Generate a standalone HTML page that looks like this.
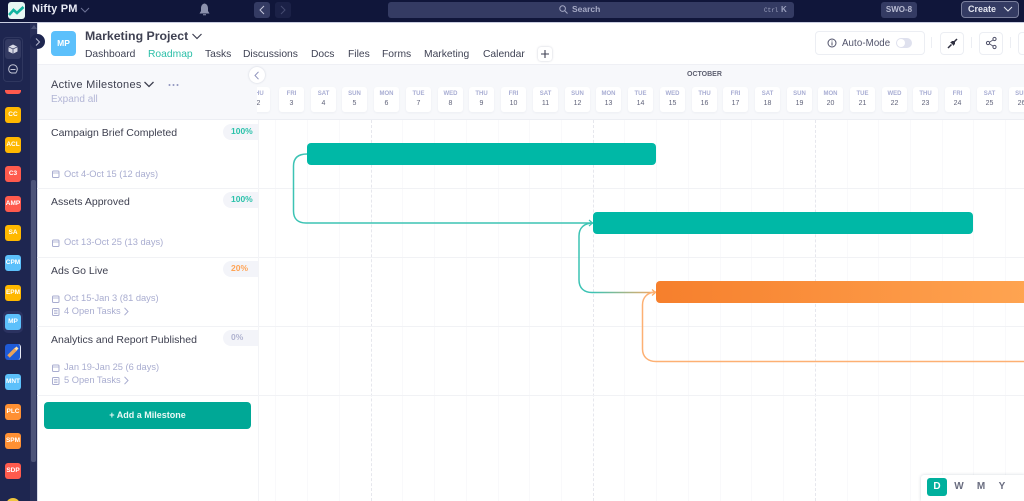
<!DOCTYPE html>
<html><head><meta charset="utf-8"><style>
*{box-sizing:border-box}
html,body{margin:0;padding:0;width:1024px;height:501px;overflow:hidden;background:#fff;font-family:"Liberation Sans",sans-serif}
#root{left:0;top:0;width:1024px;height:501px;overflow:hidden;background:#fff}
div,span{position:absolute;white-space:nowrap}
svg{position:absolute;overflow:visible}
.ic{left:5px;width:16px;height:16px;border-radius:3px;color:#fff;font-size:6.5px;font-weight:700;text-align:center;line-height:16px}
.y{background:#ffb800}.r{background:#ff5a4d}.b{background:#5cc0fb}.o{background:#ff9033}
.tab{top:48px;font-size:10.3px;color:#3f4254;line-height:13px}
.d{top:87px;width:25px;height:25px;background:#fff;border-radius:3px;box-shadow:0 1px 2px rgba(40,50,90,.05);text-align:center;font-weight:700}
.d i{position:absolute;left:0;right:0;top:4px;font-style:normal;font-size:6px;line-height:7px;color:#a8add3}
.d b{position:absolute;left:0;right:0;top:13px;font-size:7px;line-height:8px;color:#60637a;font-weight:400}
.t{left:51px;font-size:10.5px;color:#3e4050;line-height:13px}
.s{left:64px;font-size:9.3px;color:#a9add0;line-height:11px}
.p{left:223px;width:35px;height:16px;border-radius:8px 0 0 8px;background:#f3f4f9;font-size:8.5px;font-weight:700;line-height:14px;padding-left:8px}
.hl{left:37px;width:987px;height:1px;background:#f1f2f5}
.vl{top:120px;width:1px;height:381px;background:#f9f9fb}
.bar{height:22px;border-radius:4px;background:#00b8a6}
.btn{top:32px;width:24px;height:23px;border:1px solid #eceef3;border-radius:4px;background:#fff}
</style></head><body><div id="root">

<!-- top bar -->
<div style="left:0;top:0;width:1024px;height:23px;background:#10163a;border-bottom:1px solid #c9cde0"></div>
<div style="left:8px;top:2px;width:17px;height:17px;border-radius:3px;background:#e8f7f3"></div>
<svg style="left:8px;top:2px" width="17" height="17" viewBox="0 0 17 17"><path d="M1 13 L5.500 8 L9 11 L15.500 5" fill="none" stroke="#12b5a0" stroke-width="2.600"/></svg>
<div style="left:32px;top:2px;font-size:11px;font-weight:700;color:#e8eaf5;line-height:14px;letter-spacing:.2px">Nifty PM</div>
<svg style="left:80px;top:6px" width="10" height="8" viewBox="0 0 10 8"><path d="M1 2 L5 6 L9 2" fill="none" stroke="#6d7396" stroke-width="1"/></svg>
<svg style="left:199px;top:3px" width="11" height="13" viewBox="0 0 11 13"><path d="M5.500 0.500 C3 1 2 3 2 5.500 L2 8 L0.500 10.500 L10.500 10.500 L9 8 L9 5.500 C9 3 8 1 5.500 0.500 Z M4 11.300 h3 v1 h-3 Z" fill="#8c91ad"/></svg>
<div style="left:254px;top:2px;width:16px;height:16px;border-radius:3px;background:#343b63"></div>
<svg style="left:258px;top:5px" width="8" height="10" viewBox="0 0 8 10"><path d="M6 1 L2 5 L6 9" fill="none" stroke="#c6c9dc" stroke-width="1"/></svg>
<div style="left:275px;top:2px;width:16px;height:16px;border-radius:3px;background:#1b2147"></div>
<svg style="left:279px;top:5px" width="8" height="10" viewBox="0 0 8 10"><path d="M2 1 L6 5 L2 9" fill="none" stroke="#454b70" stroke-width="1"/></svg>
<div style="left:388px;top:2px;width:406px;height:16px;border-radius:3px;background:#343b63"></div>
<svg style="left:559px;top:5px" width="9" height="9" viewBox="0 0 9 9"><circle cx="3.600" cy="3.600" r="2.800" fill="none" stroke="#a5a9c4" stroke-width="1"/><path d="M5.800 5.800 L8.500 8.500" stroke="#a5a9c4" stroke-width="1"/></svg>
<div style="left:572px;top:3px;font-size:8.500px;font-weight:700;color:#a5a9c4;line-height:13px">Search</div>
<div style="left:764px;top:6px;font-family:'Liberation Mono',monospace;font-size:6px;color:#9da2bf;line-height:9px">Ctrl</div>
<div style="left:781px;top:4px;font-size:8px;font-weight:700;color:#9da2bf;line-height:11px">K</div>
<div style="left:881px;top:2px;width:36px;height:16px;border-radius:3px;background:#343b63;color:#b9bcd2;font-size:8px;font-weight:700;line-height:16px;text-align:center">SWO-8</div>
<div style="left:961px;top:1px;width:58px;height:17px;border-radius:4px;background:#343b63;border:1px solid #7a7f9d"></div>
<div style="left:968px;top:3px;font-size:9px;font-weight:700;color:#e4e6f0;line-height:13px">Create</div>
<svg style="left:1003px;top:6px" width="10" height="7" viewBox="0 0 10 7"><path d="M1 1 L5 5 L9 1" fill="none" stroke="#e4e6f0" stroke-width="1"/></svg>

<!-- sidebar -->
<div style="left:0;top:23px;width:30px;height:478px;background:#1e2650"></div>
<div style="left:30px;top:23px;width:7px;height:478px;background:#282f58"></div>
<div style="left:37px;top:23px;width:1px;height:478px;background:#d9dce9"></div>
<div style="left:31px;top:180px;width:5px;height:282px;border-radius:2px;background:#4d5479"></div>
<div style="left:31px;top:25px;width:0;height:0;border:3px solid transparent;border-bottom:4px solid #4d5479;border-top:0"></div>
<div style="left:3px;top:37px;width:20px;height:45px;border-radius:4px;border:1px solid #2f375f"></div>
<div style="left:5px;top:39px;width:16px;height:20px;border-radius:3px;background:#333a62"></div>
<svg style="left:8px;top:44px" width="10" height="10" viewBox="0 0 10 10"><path d="M5 .5 L9.500 2.800 L9.500 7.500 L5 9.800 L.5 7.500 L.5 2.800 Z" fill="#d8dae6"/><path d="M.5 2.800 L5 5 L9.500 2.800 M5 5 L5 9.800" stroke="#333a62" stroke-width=".7" fill="none"/></svg>
<svg style="left:8px;top:64px" width="10" height="10" viewBox="0 0 10 10"><path d="M5 .8 C7.500 .8 9.300 2.600 9.300 5 C9.300 6.800 8.600 8 7.800 9 L3.500 9 C1.700 8.500 .7 6.800 .7 5 C.7 2.600 2.500 .8 5 .8 Z M2.500 5.500 L7.500 5.500" fill="none" stroke="#c3c6d6" stroke-width="1"/></svg>
<div style="left:5px;top:90px;width:16px;height:4px;border-radius:0 0 3px 3px;background:#ff5a4d"></div>
<div class="ic y" style="top:107px">CC</div>
<div class="ic y" style="top:137px">ACL</div>
<div class="ic r" style="top:166px">C3</div>
<div class="ic r" style="top:196px">AMP</div>
<div class="ic y" style="top:225px">SA</div>
<div class="ic b" style="top:255px">CPM</div>
<div class="ic y" style="top:285px">EPM</div>
<div style="left:3px;top:311px;width:20px;height:22px;border-radius:5px;background:#2b3260"></div>
<div class="ic b" style="top:314px">MP</div>
<div style="left:5px;top:344px;width:16px;height:16px;border-radius:3px;background:#1f5ad6;border-right:1px solid #e8eaf5"></div>
<svg style="left:5px;top:344px" width="16" height="16" viewBox="0 0 16 16"><path d="M3.500 12.500 L11 5" stroke="#e9a25b" stroke-width="3.500"/><path d="M10.500 5.500 L12.500 3.500" stroke="#ffe0a8" stroke-width="3"/></svg>
<div class="ic b" style="top:374px">MNT</div>
<div class="ic o" style="top:404px">PLC</div>
<div class="ic o" style="top:433px">SPM</div>
<div class="ic r" style="top:463px">SDP</div>
<div style="left:6px;top:498px;width:14px;height:14px;border-radius:7px;background:#f0c53c"></div>

<!-- project header -->
<div style="left:30px;top:34px;width:15px;height:15px;border-radius:8px;background:#1e2650;z-index:3"></div>
<svg style="left:34px;top:38px;z-index:4" width="7" height="8" viewBox="0 0 7 8"><path d="M2 .5 L5.500 4 L2 7.500" fill="none" stroke="#b6bad0" stroke-width="1"/></svg>
<div style="left:51px;top:31px;width:25px;height:25px;border-radius:4px;background:#5cc0fb;color:#fff;font-size:8.500px;font-weight:700;text-align:center;line-height:25px">MP</div>
<div style="left:85px;top:28px;font-size:12.300px;font-weight:700;color:#3f4152;line-height:17px">Marketing Project</div>
<svg style="left:191px;top:32px" width="12" height="9" viewBox="0 0 12 9"><path d="M1.500 2 L6 6.500 L10.500 2" fill="none" stroke="#3f4152" stroke-width="1.200"/></svg>
<div class="tab" style="left:85px">Dashboard</div>
<div class="tab" style="left:148px;color:#2cbfa8">Roadmap</div>
<div class="tab" style="left:205px">Tasks</div>
<div class="tab" style="left:243px">Discussions</div>
<div class="tab" style="left:311px">Docs</div>
<div class="tab" style="left:348px">Files</div>
<div class="tab" style="left:382px">Forms</div>
<div class="tab" style="left:424px">Marketing</div>
<div class="tab" style="left:483px">Calendar</div>
<div style="left:538px;top:47px;width:14px;height:14px;border-radius:3px;background:#fff;box-shadow:0 0 2px rgba(40,50,90,.25)"></div>
<svg style="left:540px;top:49px" width="10" height="10" viewBox="0 0 10 10"><path d="M5 1 V9 M1 5 H9" stroke="#3f4254" stroke-width="1.100"/></svg>
<div style="left:815px;top:31px;width:110px;height:24px;border:1px solid #eceef3;border-radius:4px"></div>
<svg style="left:827px;top:38px" width="10" height="10" viewBox="0 0 10 10"><circle cx="5" cy="5" r="4" fill="none" stroke="#50526a" stroke-width="1"/><path d="M5 4.300 V7.500 M5 2.500 V3.500" stroke="#50526a" stroke-width="1"/></svg>
<div style="left:842px;top:37px;font-size:9.700px;color:#50526a;line-height:13px;letter-spacing:.1px">Auto-Mode</div>
<div style="left:896px;top:38px;width:16px;height:10px;border-radius:5px;background:#dfe1ee"></div>
<div style="left:897px;top:39px;width:8px;height:8px;border-radius:4px;background:#fff"></div>
<div style="left:931px;top:37px;width:1px;height:11px;background:#eceef3"></div>
<div class="btn" style="left:940px"></div>
<svg style="left:947px;top:38px" width="11" height="11" viewBox="0 0 11 11"><path d="M1 10 L4.500 6.500 M6.500 4.500 L10 1" fill="none" stroke="#2f3040" stroke-width="1.500"/><path d="M3 4 L7 4 L7 8 Z M4 3 L8 3 L8 7 Z" fill="#2f3040"/></svg>
<div style="left:971px;top:37px;width:1px;height:11px;background:#eceef3"></div>
<div class="btn" style="left:979px"></div>
<svg style="left:986px;top:37px" width="11" height="12" viewBox="0 0 11 12"><circle cx="8.500" cy="2" r="1.600" fill="none" stroke="#50526a"/><circle cx="2" cy="6" r="1.600" fill="none" stroke="#50526a"/><circle cx="8.500" cy="10" r="1.600" fill="none" stroke="#50526a"/><path d="M3.400 5.200 L7.100 2.900 M3.400 6.800 L7.100 9.100" stroke="#50526a" stroke-width=".9"/></svg>
<div style="left:1010px;top:37px;width:1px;height:11px;background:#eceef3"></div>
<div class="btn" style="left:1018px"></div>

<!-- header strip -->
<div style="left:38px;top:64px;width:986px;height:1px;background:#eff0f5"></div>
<div style="left:38px;top:65px;width:986px;height:55px;background:#f7f8fb"></div>
<div style="left:38px;top:119px;width:986px;height:1px;background:#eceef3"></div>
<div style="left:51px;top:78px;font-size:11px;font-weight:400;color:#3e4050;line-height:14px;letter-spacing:.3px">Active Milestones</div>
<svg style="left:143px;top:80px" width="12" height="9" viewBox="0 0 12 9"><path d="M1.500 2 L6 6.500 L10.500 2" fill="none" stroke="#3e4050" stroke-width="1.300"/></svg>
<svg style="left:168px;top:83px" width="11" height="4" viewBox="0 0 11 4"><circle cx="1.500" cy="2" r="1" fill="#8f94bd"/><circle cx="5.500" cy="2" r="1" fill="#8f94bd"/><circle cx="9.500" cy="2" r="1" fill="#8f94bd"/></svg>
<div style="left:51px;top:93px;font-size:10px;color:#b3b6d6;line-height:13px">Expand all</div>
<div style="left:687px;top:70px;font-size:7px;font-weight:700;color:#5d5f70;line-height:10px">OCTOBER</div>

<div class="d" style="left:247px;width:23px;clip-path:inset(-3px -3px -3px 10px)"><i style="left:-2px">THU</i><b>2</b></div>
<div class="d" style="left:279px"><i>FRI</i><b>3</b></div>
<div class="d" style="left:311px"><i>SAT</i><b>4</b></div>
<div class="d" style="left:342px"><i>SUN</i><b>5</b></div>
<div class="d" style="left:374px"><i>MON</i><b>6</b></div>
<div class="d" style="left:406px"><i>TUE</i><b>7</b></div>
<div class="d" style="left:438px"><i>WED</i><b>8</b></div>
<div class="d" style="left:469px"><i>THU</i><b>9</b></div>
<div class="d" style="left:501px"><i>FRI</i><b>10</b></div>
<div class="d" style="left:533px"><i>SAT</i><b>11</b></div>
<div class="d" style="left:565px"><i>SUN</i><b>12</b></div>
<div class="d" style="left:596px"><i>MON</i><b>13</b></div>
<div class="d" style="left:628px"><i>TUE</i><b>14</b></div>
<div class="d" style="left:660px"><i>WED</i><b>15</b></div>
<div class="d" style="left:692px"><i>THU</i><b>16</b></div>
<div class="d" style="left:723px"><i>FRI</i><b>17</b></div>
<div class="d" style="left:755px"><i>SAT</i><b>18</b></div>
<div class="d" style="left:787px"><i>SUN</i><b>19</b></div>
<div class="d" style="left:818px"><i>MON</i><b>20</b></div>
<div class="d" style="left:850px"><i>TUE</i><b>21</b></div>
<div class="d" style="left:882px"><i>WED</i><b>22</b></div>
<div class="d" style="left:913px"><i>THU</i><b>23</b></div>
<div class="d" style="left:945px"><i>FRI</i><b>24</b></div>
<div class="d" style="left:977px"><i>SAT</i><b>25</b></div>
<div class="d" style="left:1009px"><i>SUN</i><b>26</b></div>

<div style="left:249px;top:67px;width:16px;height:16px;border-radius:8px;background:#fff;box-shadow:0 0 2px rgba(40,50,90,.2)"></div>
<svg style="left:253px;top:71px" width="8" height="9" viewBox="0 0 8 9"><path d="M5.500 .8 L2 4.500 L5.500 8.200" fill="none" stroke="#8f94bd" stroke-width="1"/></svg>

<!-- grid -->
<div class="vl" style="left:275px"></div>
<div class="vl" style="left:307px"></div>
<div class="vl" style="left:339px"></div>
<div class="vl" style="left:402px"></div>
<div class="vl" style="left:434px"></div>
<div class="vl" style="left:466px"></div>
<div class="vl" style="left:498px"></div>
<div class="vl" style="left:529px"></div>
<div class="vl" style="left:561px"></div>
<div class="vl" style="left:624px"></div>
<div class="vl" style="left:656px"></div>
<div class="vl" style="left:688px"></div>
<div class="vl" style="left:720px"></div>
<div class="vl" style="left:751px"></div>
<div class="vl" style="left:783px"></div>
<div class="vl" style="left:847px"></div>
<div class="vl" style="left:878px"></div>
<div class="vl" style="left:910px"></div>
<div class="vl" style="left:942px"></div>
<div class="vl" style="left:973px"></div>
<div class="vl" style="left:1005px"></div>
<div class="vl" style="left:371px;width:0;background:none;border-left:1px dashed #e6e7ed"></div>
<div class="vl" style="left:593px;width:0;background:none;border-left:1px dashed #e6e7ed"></div>
<div class="vl" style="left:815px;width:0;background:none;border-left:1px dashed #e6e7ed"></div>
<div class="hl" style="top:188px"></div>
<div class="hl" style="top:257px"></div>
<div class="hl" style="top:326px"></div>
<div class="hl" style="top:395px"></div>

<!-- left panel fill -->
<div style="left:38px;top:396px;width:220px;height:105px;background:#fff"></div>
<div style="left:258px;top:120px;width:1px;height:381px;background:#f3f4f7"></div>

<!-- connectors -->
<svg style="left:0;top:0" width="1024" height="501" viewBox="0 0 1024 501">
<defs><linearGradient id="g" x1="593" y1="0" x2="656" y2="0" gradientUnits="userSpaceOnUse"><stop offset="0" stop-color="#3cc3b4"/><stop offset="1" stop-color="#fba860"/></linearGradient></defs>
<path d="M307 154 C298 154 293.500 158 293.500 166 L293.500 211 C293.500 219 298 223 306 223 L592 223" fill="none" stroke="#3cc3b4" stroke-width="1.500"/>
<path d="M589 220 L592.500 223 L589 226" fill="none" stroke="#3cc3b4" stroke-width="1.200"/>
<path d="M593 223 C584 223 579 228 579 236 L579 280 C579 288 584 292.500 592 292.500" fill="none" stroke="#3cc3b4" stroke-width="1.500"/>
<path d="M592 292.500 L655 292.500" fill="none" stroke="url(#g)" stroke-width="1.500"/>
<path d="M652 289.500 L655.500 292.500 L652 295.500" fill="none" stroke="#fba860" stroke-width="1.200"/>
<path d="M656 292 C648 292 642.500 297 642.500 305 L642.500 349 C642.500 357 648 361.500 656 361.500 L1024 361.500" fill="none" stroke="#fdb073" stroke-width="1.500"/>
</svg>

<!-- bars -->
<div class="bar" style="left:307px;top:143px;width:349px"></div>
<div class="bar" style="left:593px;top:212px;width:380px"></div>
<div class="bar" style="left:656px;top:281px;width:380px;background:linear-gradient(90deg,#f67f2c,#ffa552)"></div>

<!-- rows -->
<div class="t" style="top:127px">Campaign Brief Completed</div>
<div class="p" style="top:124px;color:#2cc2ab">100%</div>
<svg style="left:52px;top:170px" width="8" height="8" viewBox="0 0 8 8"><rect x=".5" y="1" width="6.500" height="6.500" rx="1" fill="none" stroke="#a9add0"/><path d="M.5 3 H7" stroke="#a9add0" stroke-width=".8"/></svg>
<div class="s" style="top:169px">Oct 4-Oct 15 (12 days)</div>

<div class="t" style="top:196px">Assets Approved</div>
<div class="p" style="top:192px;color:#2cc2ab">100%</div>
<svg style="left:52px;top:239px" width="8" height="8" viewBox="0 0 8 8"><rect x=".5" y="1" width="6.500" height="6.500" rx="1" fill="none" stroke="#a9add0"/><path d="M.5 3 H7" stroke="#a9add0" stroke-width=".8"/></svg>
<div class="s" style="top:237px">Oct 13-Oct 25 (13 days)</div>

<div class="t" style="top:265px">Ads Go Live</div>
<div class="p" style="top:261px;color:#ffa455">20%</div>
<svg style="left:52px;top:295px" width="8" height="8" viewBox="0 0 8 8"><rect x=".5" y="1" width="6.500" height="6.500" rx="1" fill="none" stroke="#a9add0"/><path d="M.5 3 H7" stroke="#a9add0" stroke-width=".8"/></svg>
<div class="s" style="top:293px">Oct 15-Jan 3 (81 days)</div>
<svg style="left:52px;top:308px" width="8" height="8" viewBox="0 0 8 8"><rect x=".5" y=".5" width="6.500" height="7" rx="1" fill="none" stroke="#a9add0"/><path d="M2 2.500 H5.500 M2 4 H5.500 M2 5.500 H5.500" stroke="#a9add0" stroke-width=".7"/></svg>
<div class="s" style="top:306px">4 Open Tasks</div>
<svg style="left:123px;top:307px" width="7" height="9" viewBox="0 0 7 9"><path d="M1.500 .8 L5 4.500 L1.500 8.200" fill="none" stroke="#a9add0" stroke-width="1"/></svg>

<div class="t" style="top:334px">Analytics and Report Published</div>
<div class="p" style="top:330px;color:#b0b3d0">0%</div>
<svg style="left:52px;top:364px" width="8" height="8" viewBox="0 0 8 8"><rect x=".5" y="1" width="6.500" height="6.500" rx="1" fill="none" stroke="#a9add0"/><path d="M.5 3 H7" stroke="#a9add0" stroke-width=".8"/></svg>
<div class="s" style="top:362px">Jan 19-Jan 25 (6 days)</div>
<svg style="left:52px;top:377px" width="8" height="8" viewBox="0 0 8 8"><rect x=".5" y=".5" width="6.500" height="7" rx="1" fill="none" stroke="#a9add0"/><path d="M2 2.500 H5.500 M2 4 H5.500 M2 5.500 H5.500" stroke="#a9add0" stroke-width=".7"/></svg>
<div class="s" style="top:375px">5 Open Tasks</div>
<svg style="left:123px;top:376px" width="7" height="9" viewBox="0 0 7 9"><path d="M1.500 .8 L5 4.500 L1.500 8.200" fill="none" stroke="#a9add0" stroke-width="1"/></svg>

<div style="left:44px;top:402px;width:207px;height:27px;border-radius:4px;background:#00a896;color:#e8f8f5;font-size:9px;font-weight:700;text-align:center;line-height:27px">+ Add a Milestone</div>

<!-- zoom switch -->
<div style="left:921px;top:475px;width:104px;height:26px;background:#fff;box-shadow:0 0 3px rgba(40,50,90,.2);border-radius:3px 0 0 0"></div>
<div style="left:927px;top:478px;width:20px;height:18px;border-radius:3px;background:#00b09d;color:#fff;font-size:10px;font-weight:700;text-align:center;line-height:18px">D</div>
<div style="left:949px;top:478px;width:20px;height:18px;color:#6a6d80;font-size:10px;font-weight:700;text-align:center;line-height:18px">W</div>
<div style="left:971px;top:478px;width:20px;height:18px;color:#6a6d80;font-size:10px;font-weight:700;text-align:center;line-height:18px">M</div>
<div style="left:992px;top:478px;width:20px;height:18px;color:#6a6d80;font-size:10px;font-weight:700;text-align:center;line-height:18px">Y</div>
</div></body></html>
